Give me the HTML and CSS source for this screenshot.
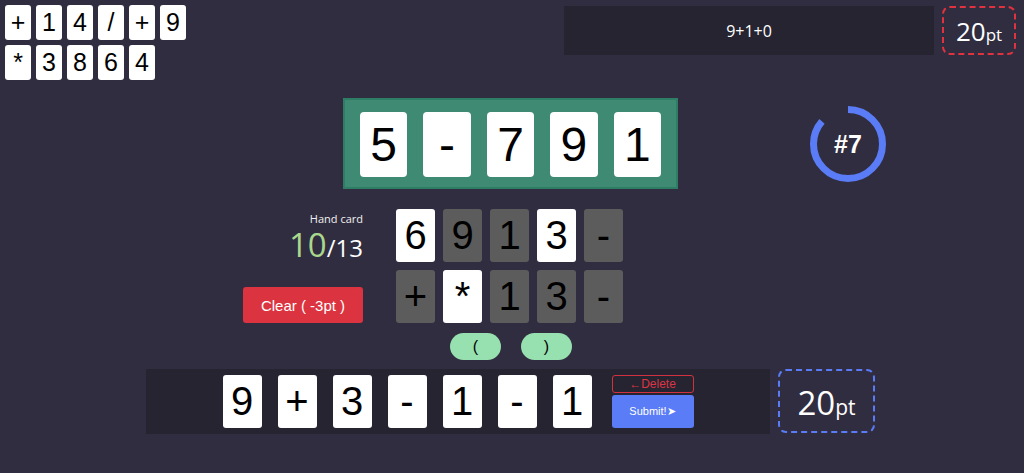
FILE: index.html
```html
<!DOCTYPE html>
<html lang="en">
<head>
    <meta charset="UTF-8">
    <meta name="viewport" content="width=device-width, initial-scale=1.0">
    <title>Make 10</title>
    <link rel="stylesheet" href="styles.css">
</head>
<body>
    <div class="top">
        <div class="pool">
            <div class="card mini">+</div>
            <div class="card mini">1</div>
            <div class="card mini">4</div>
            <div class="card mini">/</div>
            <div class="card mini">+</div>
            <div class="card mini">9</div>
            <div class="card mini">*</div>
            <div class="card mini">3</div>
            <div class="card mini">8</div>
            <div class="card mini">6</div>
            <div class="card mini">4</div>
        </div>
        <div class="history">
            <div class="history-log">9+1+0</div>
            <div class="score red">20<small>pt</small></div>
        </div>
    </div>

    <div class="target-row">
        <div class="target">
            <div class="card big">5</div>
            <div class="card big">-</div>
            <div class="card big">7</div>
            <div class="card big">9</div>
            <div class="card big">1</div>
        </div>
        <div class="round">
            <svg width="78" height="78" viewBox="0 0 78 78">
                <circle cx="39" cy="39" r="34.5" fill="none" stroke="#5a7cf6" stroke-width="7"
                        stroke-dasharray="187 300" transform="rotate(-90 39 39)"/>
            </svg>
            <span class="round-num">#7</span>
        </div>
    </div>

    <div class="hand-row">
        <div class="hand-info">
            <div class="hand-label">Hand card</div>
            <div class="hand-count"><span class="used">10</span>/13</div>
            <button class="clear-btn">Clear ( -3pt )</button>
        </div>
        <div class="hand">
            <div class="card mid">6</div>
            <div class="card mid off">9</div>
            <div class="card mid off">1</div>
            <div class="card mid">3</div>
            <div class="card mid off">-</div>
            <div class="card mid off">+</div>
            <div class="card mid">*</div>
            <div class="card mid off">1</div>
            <div class="card mid off">3</div>
            <div class="card mid off">-</div>
        </div>
    </div>

    <div class="parens">
        <button class="paren">(</button>
        <button class="paren">)</button>
    </div>

    <div class="answer-row">
        <div class="answer">
            <div class="formula">
                <div class="card mid">9</div>
                <div class="card mid">+</div>
                <div class="card mid">3</div>
                <div class="card mid">-</div>
                <div class="card mid">1</div>
                <div class="card mid">-</div>
                <div class="card mid">1</div>
            </div>
            <div class="actions">
                <button class="delete-btn">&larr;Delete</button>
                <button class="submit-btn">Submit!&#10148;</button>
            </div>
        </div>
        <div class="score blue">20<small>pt</small></div>
    </div>
</body>
</html>
```

FILE: styles.css
```css
* { margin: 0; padding: 0; box-sizing: border-box; }
body {
    font-family: 'Open Sans', 'Noto Sans', sans-serif;
    background: #312d40;
    color: #fff;
    width: 1024px;
    height: 473px;
    overflow: hidden;
}
button { font-family: 'Liberation Sans', Arial, sans-serif; border: none; cursor: pointer; }

.card {
    background: #fff;
    color: #000;
    border-radius: 3px;
    display: flex;
    align-items: center;
    justify-content: center;
    font-family: 'Liberation Sans', Arial, sans-serif;
}
.card.mini { width: 26px; height: 35px; font-size: 25px; }
.card.big { width: 48px; height: 65px; font-size: 48px; border-radius: 4px; }
.card.mid { width: 39px; height: 53px; font-size: 40px; }
.card.off { background: #5c5c5c; }

/* top */
.top { display: flex; align-items: flex-start; height: 98px; }
.pool {
    display: flex;
    flex-wrap: wrap;
    gap: 5px;
    width: 191px;
    padding: 5px 0 0 5px;
}
.history { display: flex; gap: 8px; margin-left: auto; padding: 6px 8px 0 0; }
.history-log {
    width: 370px;
    height: 49px;
    background: #262430;
    display: flex;
    align-items: center;
    justify-content: center;
    font-size: 16px;
}
.score {
    display: flex;
    align-items: baseline;
    justify-content: center;
    border-radius: 8px;
    border: 2px dashed;
}
.score.red {
    width: 74px; height: 49px;
    border-color: #e0323f;
    font-size: 26px;
    padding-top: 5px;
}
.score.red small { font-size: 17px; }
.score.blue {
    width: 97px; height: 64px;
    border-color: #5a7cf6;
    font-size: 33px;
    padding-top: 9px;
}
.score.blue small { font-size: 21px; }

/* target */
.target-row { display: flex; align-items: center; padding-left: 343px; height: 91px; }
.target {
    display: flex;
    gap: 16px;
    width: 335px;
    height: 91px;
    padding: 12px 15px;
    background: #3e8a72;
    border: 2px solid #2e7d64;
}
.round {
    position: relative;
    width: 78px;
    height: 78px;
    margin-left: 131px;
    margin-top: 1px;
}
.round svg { display: block; }
.round-num {
    position: absolute;
    inset: 0;
    display: flex;
    align-items: center;
    justify-content: center;
    font-family: 'Liberation Sans', Arial, sans-serif;
    font-weight: bold;
    font-size: 25px;
}

/* hand */
.hand-row { display: flex; align-items: flex-start; gap: 33px; margin-top: 20px; height: 114px; }
.hand-info {
    width: 363px;
    height: 114px;
    display: flex;
    flex-direction: column;
    align-items: flex-end;
}
.hand-label { font-size: 11px; line-height: 15px; color: #f0f0f0; margin-top: 2px; }
.hand-count { font-size: 24px; line-height: 36px; height: 38px; margin-top: 1px; }
.hand-count .used { font-size: 33px; color: #a9d88d; }
.clear-btn {
    margin-top: auto;
    width: 120px;
    height: 36px;
    background: #dc3340;
    color: #fff;
    font-size: 15px;
    border-radius: 3px;
}
.hand {
    display: grid;
    grid-template-columns: repeat(5, 39px);
    grid-auto-rows: 53px;
    gap: 8px 8px;
}

/* parens */
.parens { display: flex; justify-content: center; gap: 20px; margin-top: 10px; padding-right: 2px; }
.paren {
    width: 51px;
    height: 27px;
    border-radius: 14px;
    background: #97e0b0;
    color: #000;
    font-size: 16px;
}

/* answer */
.answer-row { display: flex; justify-content: center; gap: 8px; margin-top: 9px; padding-right: 3px; }
.answer {
    display: flex;
    justify-content: center;
    align-items: center;
    gap: 20px;
    width: 624px;
    height: 65px;
    background: #262430;
}
.formula { display: flex; gap: 16px; }
.actions { display: flex; flex-direction: column; gap: 2px; width: 82px; }
.delete-btn {
    height: 18px;
    background: transparent;
    border: 1px solid #d23240;
    border-radius: 3px;
    color: #dc3545;
    font-size: 12px;
}
.submit-btn {
    height: 33px;
    background: #5a7cf6;
    color: #fff;
    font-size: 11px;
    border-radius: 3px;
}
```
